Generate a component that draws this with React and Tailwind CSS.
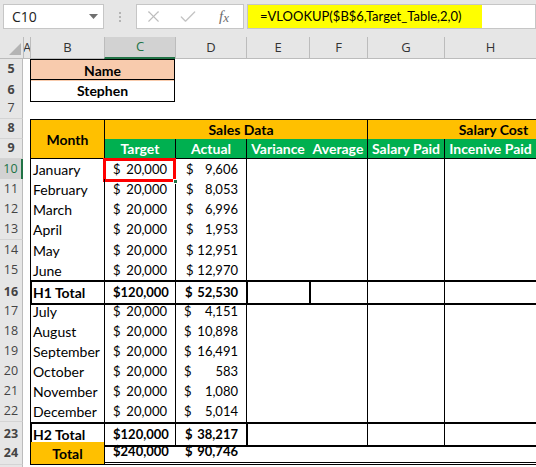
import { X, Check } from "lucide-react"

const COLS = "grid grid-cols-[23px_7px_74px_71px_71px_63px_58px_77px_92px_83px]"

const firstHalf = [
  { n: 10, month: "January", actual: "9,606", active: true, inset: true },
  { n: 11, month: "February", actual: "8,053", inset: true },
  { n: 12, month: "March", actual: "6,996", inset: true },
  { n: 13, month: "April", actual: "1,953", tall: true, inset: true },
  { n: 14, month: "May", actual: "12,951", inset: true },
  { n: 15, month: "June", actual: "12,970", inset: true },
]

const secondHalf = [
  { n: 17, month: "July", actual: "4,151" },
  { n: 18, month: "August", actual: "10,898" },
  { n: 19, month: "September", actual: "16,491" },
  { n: 20, month: "October", actual: "583" },
  { n: 21, month: "November", actual: "1,080" },
  { n: 22, month: "December", actual: "5,014", tall: true },
]

const RowHead = ({ n, active }) => {
  if (active) {
    return (
      <div className="flex items-center justify-center border-b border-r-2 border-b-[#bcbcbc] border-r-[#217346] bg-[#d2d2d2] font-['Open_Sans',sans-serif] text-[12.5px] text-[#217346]">
        {n}
      </div>
    )
  }
  return (
    <div className="flex items-center justify-center border-b border-r border-b-[#d4d4d4] border-r-[#bcbcbc] bg-[#e6e6e6] font-['Open_Sans',sans-serif] text-[12.5px] text-[#444]">
      {n}
    </div>
  )
}

// accounting format: $ on the left, figure on the right
const Acct = ({ v }) => (
  <div className="flex h-full items-center justify-between px-[8px] text-[13px]">
    <span>$</span>
    <span>{v}</span>
  </div>
)

const DataRow = ({ n, month, actual, tall, active, inset }) => (
  <div className={`${COLS} ${tall ? "h-[21px]" : "h-[20px]"}`}>
    <RowHead n={n} active={active} />
    <div />
    <div className="flex items-center border-l border-black pl-[2px]">{month}</div>
    <div className="relative border-l border-black">
      <Acct v="20,000" />
      {active && (
        <>
          <div className="absolute -bottom-[2px] -left-[2px] -right-[1px] -top-[1px] border-[3px] border-[#ff0000]" />
          <div className="absolute -bottom-[4px] -right-[3px] h-[5px] w-[5px] border border-white bg-[#217346]" />
        </>
      )}
    </div>
    <div className={inset ? "border-l border-black pl-[2px]" : "border-l border-black"}>
      <Acct v={actual} />
    </div>
    <div className="border-l border-black" />
    <div />
    <div className="border-l border-black" />
    <div className="border-l border-black" />
    <div />
  </div>
)

const TotalRow = ({ n, label, target, actual, split, tall }) => (
  <div className={`${COLS} ${tall ? "h-[21px]" : "h-[20px]"} font-bold`}>
    <RowHead n={n} />
    <div />
    <div className="flex items-center border-y-2 border-l-2 border-black pl-[1px]">{label}</div>
    <div className="border-y-2 border-l border-black">
      <Acct v={target} />
    </div>
    <div className="border-y-2 border-l border-black pl-px">
      <Acct v={actual} />
    </div>
    <div className="border-y-2 border-l-2 border-black" />
    <div className={split ? "border-y-2 border-l-2 border-black" : "border-y-2 border-black"} />
    <div className="border-y-2 border-l border-black" />
    <div className="border-y-2 border-l border-black" />
    <div className="border-y-2 border-black" />
  </div>
)

const TopBar = () => (
  <div className="flex h-[37px] items-start bg-[#e6e6e6] pt-[4px]">
    <div className="ml-[3px] flex h-[25px] w-[101px] items-center justify-between border border-[#c6c6c6] bg-white pl-[8px] pr-[5px] font-['Open_Sans',sans-serif] text-[14px] text-[#222]">
      <span>C10</span>
      <svg width="9" height="5" viewBox="0 0 9 5">
        <path d="M0 0h9L4.5 5z" fill="#6f6f6f" />
      </svg>
    </div>
    <div className="flex h-[25px] w-[32px] flex-col items-center justify-center gap-[2px]">
      <span className="h-[2px] w-[2px] bg-[#b4b4b4]" />
      <span className="h-[2px] w-[2px] bg-[#b4b4b4]" />
      <span className="h-[2px] w-[2px] bg-[#b4b4b4]" />
    </div>
    <div className="flex h-[25px] w-[108px] items-center border border-[#c6c6c6] bg-white">
      <div className="flex w-[33px] justify-center">
        <X size={19} strokeWidth={1.4} color="#bdbdbd" />
      </div>
      <div className="flex w-[36px] justify-center">
        <Check size={20} strokeWidth={1.6} color="#c4c4c4" />
      </div>
      <div className="flex w-[36px] items-baseline justify-center font-['Liberation_Serif',serif] text-[15px] italic text-[#6d6d6d]">
        <span>f</span>
        <span className="relative top-[1px] text-[13px]">x</span>
      </div>
    </div>
    <div className="ml-[3px] flex h-[25px] flex-1 border border-[#c6c6c6] bg-white">
      <div className="flex w-[234px] items-center bg-[#ffff00] pl-[12px] text-[13px] text-black">
        =VLOOKUP($B$6,Target_Table,2,0)
      </div>
    </div>
  </div>
)

const ColHeaders = () => (
  <div className={`${COLS} h-[22px] font-['Open_Sans',sans-serif] text-[13px] text-[#333]`}>
    <div className="relative border-b border-[#bcbcbc] bg-[#e6e6e6]">
      <svg className="absolute bottom-[3px] right-[2px]" width="12" height="12" viewBox="0 0 12 12">
        <polygon points="12,0 12,12 0,12" fill="#b4b4b4" />
      </svg>
    </div>
    <div className="flex items-center justify-center overflow-hidden border-b border-l border-[#bcbcbc] bg-[#e6e6e6]">A</div>
    <div className="flex items-center justify-center border-b border-l border-[#bcbcbc] bg-[#e6e6e6]">B</div>
    <div className="flex items-center justify-center border-b-2 border-l border-b-[#217346] border-l-[#bcbcbc] bg-[#d2d2d2] text-[#217346]">C</div>
    <div className="flex items-center justify-center border-b border-l border-[#bcbcbc] bg-[#e6e6e6]">D</div>
    <div className="flex items-center justify-center border-b border-l border-[#bcbcbc] bg-[#e6e6e6]">E</div>
    <div className="flex items-center justify-center border-b border-l border-[#bcbcbc] bg-[#e6e6e6]">F</div>
    <div className="flex items-center justify-center border-b border-l border-[#bcbcbc] bg-[#e6e6e6]">G</div>
    <div className="flex items-center justify-center border-b border-l border-[#bcbcbc] bg-[#e6e6e6]">H</div>
    <div className="border-b border-l border-[#bcbcbc] bg-[#e6e6e6]" />
  </div>
)

export default function App() {
  return (
    <div className="h-[467px] w-[536px] overflow-hidden bg-white font-['Lato',sans-serif] text-[14px] text-black">
      <TopBar />
      <ColHeaders />

      <div className={`${COLS} h-[20px] font-bold`}>
        <RowHead n={5} />
        <div />
        <div className="col-span-2 flex items-center justify-center border-x border-t border-black bg-[#f8cbad]">Name</div>
      </div>
      <div className={`${COLS} h-[20px] font-bold`}>
        <RowHead n={6} />
        <div />
        <div className="col-span-2 flex items-center justify-center border border-black">Stephen</div>
      </div>
      <div className={`${COLS} h-[20px]`}>
        <RowHead n={7} />
      </div>

      <div className={`${COLS} grid-rows-[20px_20px] font-bold`}>
        <div className="col-start-1 row-start-1 grid">
          <RowHead n={8} />
        </div>
        <div className="col-start-1 row-start-2 grid">
          <RowHead n={9} />
        </div>
        <div className="col-start-3 row-span-2 row-start-1 flex items-center justify-center border-y border-l border-black bg-[#ffc000]">Month</div>
        <div className="col-span-4 col-start-4 row-start-1 flex items-center justify-center border-l border-t border-black bg-[#ffc000] pl-[10px]">Sales Data</div>
        <div className="col-span-3 col-start-8 row-start-1 flex items-center justify-center border-l border-t border-black bg-[#ffc000]">Salary Cost</div>
        <div className="col-start-4 row-start-2 flex items-center justify-center border-b border-l border-black bg-[#00b050] text-white">Target</div>
        <div className="col-start-5 row-start-2 flex items-center justify-center border-b border-l border-black bg-[#00b050] text-white">Actual</div>
        <div className="col-start-6 row-start-2 flex items-center justify-center border-b border-l border-black bg-[#00b050] text-white">Variance</div>
        <div className="col-start-7 row-start-2 flex items-center justify-center border-b border-black bg-[#00b050] text-white">Average</div>
        <div className="col-start-8 row-start-2 flex items-center justify-center whitespace-nowrap border-b border-l border-black bg-[#00b050] text-white">Salary Paid</div>
        <div className="col-start-9 row-start-2 flex items-center justify-center whitespace-nowrap border-b border-l border-black bg-[#00b050] text-white">Incenive Paid</div>
        <div className="col-start-10 row-start-2 border-b border-l border-black bg-[#00b050]" />
      </div>

      {firstHalf.map((r) => (
        <DataRow key={r.n} {...r} />
      ))}
      <TotalRow n={16} label="H1 Total" target="120,000" actual="52,530" split tall />
      {secondHalf.map((r) => (
        <DataRow key={r.n} {...r} />
      ))}
      <TotalRow n={23} label="H2 Total" target="120,000" actual="38,217" />

      <div className={`${COLS} h-[23px] font-bold`}>
        <RowHead n={24} />
        <div />
        <div className="flex items-center justify-center border-b border-l border-black bg-[#ffc000]">Total</div>
        <div className="border-b-[3px] border-l border-double border-black">
          <Acct v="240,000" />
        </div>
        <div className="border-b-[3px] border-double border-black pl-[2px]">
          <Acct v="90,746" />
        </div>
        <div className="border-b-[3px] border-double border-black" />
        <div className="border-b-[3px] border-double border-black" />
        <div className="border-b-[3px] border-double border-black" />
        <div className="border-b-[3px] border-double border-black" />
        <div className="border-b-[3px] border-double border-black" />
      </div>
      <div className={`${COLS} h-[20px]`}>
        <RowHead n="" />
      </div>
    </div>
  )
}
